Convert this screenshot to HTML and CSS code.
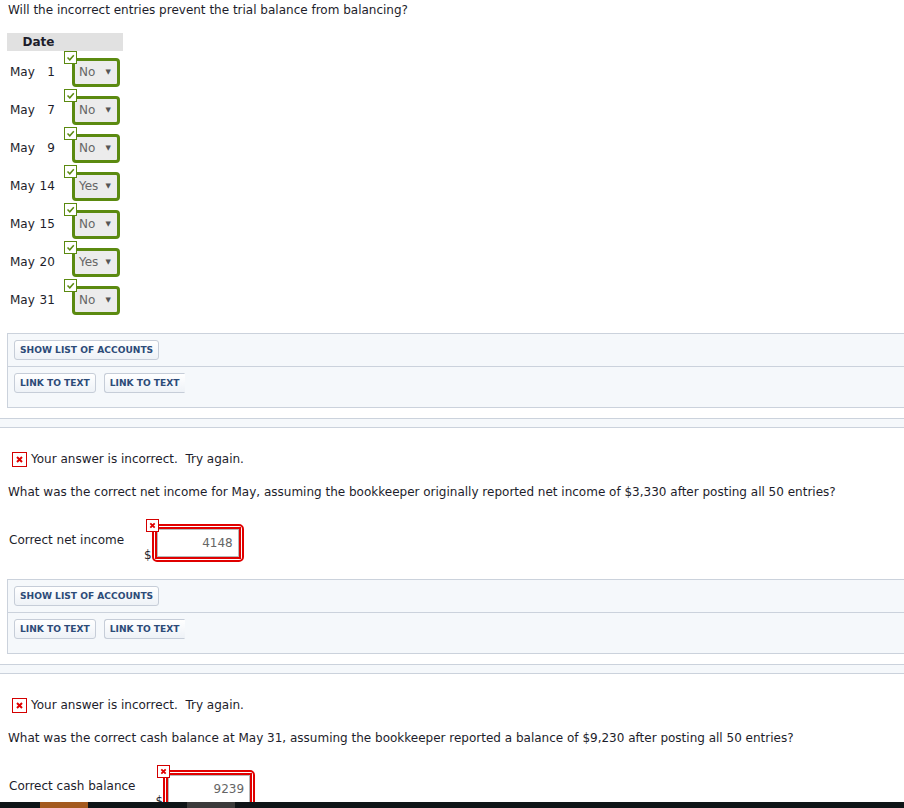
FILE: index.html
```html
<!DOCTYPE html>
<html lang="en">
<head>
    <meta charset="UTF-8">
    <title>Trial Balance Question</title>
    <link rel="stylesheet" href="styles.css">
</head>
<body>

    <!-- Part 1 -->
    <div class="part first">
        <p class="question">Will the incorrect entries prevent the trial balance from balancing?</p>

        <table class="entries">
            <thead>
                <tr><th class="date-head">Date</th><th class="blank-head"></th></tr>
            </thead>
            <tbody>
                <tr><td class="date"><span>May</span><span class="day">1</span></td><td><div class="pick"><span class="ok"><svg viewBox="0 0 11 11"><polyline points="2.5,5.5 4.8,7.8 8.8,3.2"/></svg></span><div class="choice">No<span class="caret">&#9660;</span></div></div></td></tr>
                <tr><td class="date"><span>May</span><span class="day">7</span></td><td><div class="pick"><span class="ok"><svg viewBox="0 0 11 11"><polyline points="2.5,5.5 4.8,7.8 8.8,3.2"/></svg></span><div class="choice">No<span class="caret">&#9660;</span></div></div></td></tr>
                <tr><td class="date"><span>May</span><span class="day">9</span></td><td><div class="pick"><span class="ok"><svg viewBox="0 0 11 11"><polyline points="2.5,5.5 4.8,7.8 8.8,3.2"/></svg></span><div class="choice">No<span class="caret">&#9660;</span></div></div></td></tr>
                <tr><td class="date"><span>May</span><span class="day">14</span></td><td><div class="pick"><span class="ok"><svg viewBox="0 0 11 11"><polyline points="2.5,5.5 4.8,7.8 8.8,3.2"/></svg></span><div class="choice">Yes<span class="caret">&#9660;</span></div></div></td></tr>
                <tr><td class="date"><span>May</span><span class="day">15</span></td><td><div class="pick"><span class="ok"><svg viewBox="0 0 11 11"><polyline points="2.5,5.5 4.8,7.8 8.8,3.2"/></svg></span><div class="choice">No<span class="caret">&#9660;</span></div></div></td></tr>
                <tr><td class="date"><span>May</span><span class="day">20</span></td><td><div class="pick"><span class="ok"><svg viewBox="0 0 11 11"><polyline points="2.5,5.5 4.8,7.8 8.8,3.2"/></svg></span><div class="choice">Yes<span class="caret">&#9660;</span></div></div></td></tr>
                <tr><td class="date"><span>May</span><span class="day">31</span></td><td><div class="pick"><span class="ok"><svg viewBox="0 0 11 11"><polyline points="2.5,5.5 4.8,7.8 8.8,3.2"/></svg></span><div class="choice">No<span class="caret">&#9660;</span></div></div></td></tr>
            </tbody>
        </table>

        <div class="tools">
            <div class="tools-row"><button class="tool-btn">Show List of Accounts</button></div>
            <div class="tools-row last"><button class="tool-btn">Link to Text</button><button class="tool-btn cut">Link to Text</button></div>
        </div>
    </div>

    <div class="divider"></div>

    <!-- Part 2 -->
    <div class="part">
        <div class="feedback"><span class="bad"><svg viewBox="0 0 13 13"><path d="M4 4 L9 9 M9 4 L4 9"/></svg></span>Your answer is incorrect.&nbsp; Try again.</div>
        <p class="question">What was the correct net income for May, assuming the bookkeeper originally reported net income of $3,330 after posting all 50 entries?</p>

        <div class="answer-row">
            <label class="answer-label">Correct net income</label>
            <span class="dollar">$</span>
            <div class="field-wrap">
                <span class="bad small"><svg viewBox="0 0 11 11"><path d="M3.3 3.3 L7.7 7.7 M7.7 3.3 L3.3 7.7"/></svg></span>
                <div class="field"><input type="text" value="4148"></div>
            </div>
        </div>

        <div class="tools">
            <div class="tools-row"><button class="tool-btn">Show List of Accounts</button></div>
            <div class="tools-row last"><button class="tool-btn">Link to Text</button><button class="tool-btn cut">Link to Text</button></div>
        </div>
    </div>

    <div class="divider"></div>

    <!-- Part 3 -->
    <div class="part">
        <div class="feedback"><span class="bad"><svg viewBox="0 0 13 13"><path d="M4 4 L9 9 M9 4 L4 9"/></svg></span>Your answer is incorrect.&nbsp; Try again.</div>
        <p class="question">What was the correct cash balance at May 31, assuming the bookkeeper reported a balance of $9,230 after posting all 50 entries?</p>

        <div class="answer-row">
            <label class="answer-label">Correct cash balance</label>
            <span class="dollar">$</span>
            <div class="field-wrap">
                <span class="bad small"><svg viewBox="0 0 11 11"><path d="M3.3 3.3 L7.7 7.7 M7.7 3.3 L3.3 7.7"/></svg></span>
                <div class="field"><input type="text" value="9239"></div>
            </div>
        </div>
    </div>

    <!-- window strip at the bottom edge -->
    <div class="taskbar">
        <span class="task orange"></span>
        <span class="task grey"></span>
    </div>

</body>
</html>
```

FILE: styles.css
```css
body {
    margin: 0;
    font-family: Verdana, "DejaVu Sans", sans-serif;
    font-size: 12px;
    color: #1d1d2b;
    background-color: #fff;
    overflow: hidden;
}
.part {
    padding-top: 24px;
}
.part.first {
    padding-top: 3px;
}
.question {
    margin: 0;
    padding: 0 8px;
    line-height: 15px;
}
.entries {
    margin: 15px 0 0 7px;
    border-collapse: separate;
    border-spacing: 0;
}
.entries th {
    background-color: #e1e1e1;
    height: 18px;
    padding: 0;
    font-weight: bold;
    font-size: 12px;
    line-height: 18px;
}
.date-head {
    width: 63px;
    text-align: center;
}
.blank-head {
    width: 53px;
}
.entries td {
    height: 38px;
    padding: 0;
    vertical-align: middle;
}
.entries tbody tr:first-child td {
    padding-top: 2px;
}
.date {
    padding-left: 3px !important;
    white-space: nowrap;
}
.day {
    display: inline-block;
    width: 20px;
    text-align: right;
}
.pick {
    position: relative;
    margin-left: 2px;
    width: 48px;
}
.ok {
    position: absolute;
    top: -7px;
    left: -8px;
    width: 11px;
    height: 11px;
    border: 1px solid #5b8a10;
    background-color: #fff;
}
.ok svg {
    display: block;
    width: 11px;
    height: 11px;
    fill: none;
    stroke: #5b8a10;
    stroke-width: 1.5;
}
.choice {
    box-sizing: border-box;
    height: 29px;
    border: 3px solid #5b8a10;
    border-radius: 4px;
    background-color: #ececec;
    color: #666;
    padding-left: 4px;
    line-height: 23px;
    display: flex;
    justify-content: space-between;
    padding-right: 6px;
}
.caret {
    font-size: 7px;
    color: #555;
}
.tools {
    margin: 14px -10px 0 7px;
    border: 1px solid #cbd2dc;
    background-color: #f5f8fb;
}
.tools-row {
    padding: 6px 6px 6px;
    display: flex;
    gap: 8px;
}
.tools-row.last {
    border-top: 1px solid #cbd2dc;
    padding-bottom: 14px;
}
.tool-btn {
    height: 20px;
    padding: 0 5px;
    border: 1px solid #c6cdd8;
    border-radius: 3px;
    background: linear-gradient(#ffffff, #eef2f7);
    color: #2d4b78;
    font-family: Verdana, "DejaVu Sans", sans-serif;
    font-size: 9.1px;
    font-weight: bold;
    text-transform: uppercase;
    letter-spacing: 0;
}
.tool-btn.cut {
    border-right-color: transparent;
    border-radius: 3px 0 0 3px;
}
.divider {
    margin-top: 10px;
    height: 8px;
    border-top: 1px solid #cbd2dc;
    border-bottom: 1px solid #cbd2dc;
    background-color: #f5f8fb;
}
.feedback {
    display: flex;
    align-items: center;
    padding-left: 12px;
    line-height: 15px;
}
.bad {
    box-sizing: border-box;
    width: 15px;
    height: 15px;
    border: 1px solid #d40000;
    background-color: #fff;
    margin-right: 4px;
}
.bad svg {
    display: block;
    width: 13px;
    height: 13px;
    fill: none;
    stroke: #e00000;
    stroke-width: 2;
}
.feedback + .question {
    margin-top: 18px;
}
.answer-row {
    display: flex;
    align-items: flex-start;
    padding-left: 9px;
    margin-top: 24px;
}
.answer-label {
    margin-top: 9px;
    line-height: 15px;
    margin-right: 20px;
}
.dollar {
    align-self: flex-end;
    line-height: 12px;
    margin-bottom: 1px;
}
.field-wrap {
    position: relative;
    border: 2px solid #e00000;
    border-radius: 5px;
    padding: 1px;
    background-color: #fff;
}
.bad.small {
    position: absolute;
    top: -7px;
    left: -8px;
    width: 13px;
    height: 13px;
    margin: 0;
}
.bad.small svg {
    width: 11px;
    height: 11px;
    stroke-width: 1.8;
}
.field {
    border: 2px solid #e00000;
}
.field input {
    display: block;
    box-sizing: border-box;
    width: 82px;
    height: 28px;
    border: 1px solid #b9b9b9;
    padding: 0 5px;
    font-family: Verdana, "DejaVu Sans", sans-serif;
    font-size: 12px;
    color: #666;
    text-align: right;
}
.answer-row + .tools {
    margin-top: 17px;
}
.taskbar {
    position: fixed;
    left: 0;
    right: 0;
    bottom: 0;
    height: 6px;
    background-color: #0e1417;
}
.task {
    position: absolute;
    top: 0;
    height: 6px;
    width: 48px;
}
.task.orange {
    left: 40px;
    background-color: #a45a1f;
}
.task.grey {
    left: 187px;
    background-color: #3b3b3b;
}
```
